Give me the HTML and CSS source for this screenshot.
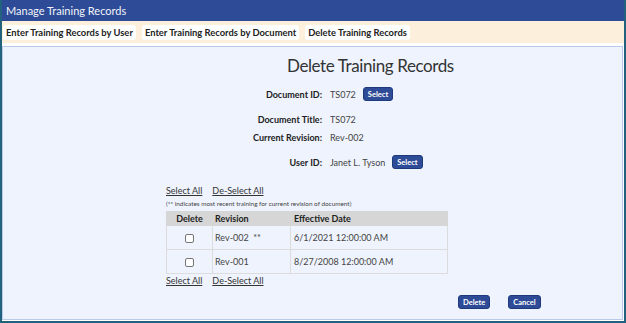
FILE: index.html
```html
<!DOCTYPE html>
<html lang="en">
<head>
    <title>Manage Training Records</title>
<link rel="stylesheet" href="styles.css">
</head>
<body>
    <div id="frame">
        <div id="titlebar">Manage Training Records</div>
        <div id="tabs">
            <a class="tab" href="#">Enter Training Records by User</a>
            <a class="tab" href="#">Enter Training Records by Document</a>
            <a class="tab" href="#">Delete Training Records</a>
        </div>
        <div id="panel">
            <h1 id="pageTitle">Delete Training Records</h1>
            <div class="row first">
                <div class="label">Document ID:</div>
                <div class="value">TS072 <button class="btn">Select</button></div>
            </div>
            <div class="row second">
                <div class="label">Document Title:</div>
                <div class="value">TS072</div>
            </div>
            <div class="row">
                <div class="label">Current Revision:</div>
                <div class="value">Rev-002</div>
            </div>
            <div class="row fourth">
                <div class="label">User ID:</div>
                <div class="value">Janet L. Tyson <button class="btn">Select</button></div>
            </div>

            <div id="records">
                <div class="links"><a href="#">Select All</a><a href="#">De-Select All</a></div>
                <div id="note">(** indicates most recent training for current revision of document)</div>
                <table id="grid">
                    <tr>
                        <th class="cDel">Delete</th>
                        <th class="cRev">Revision</th>
                        <th class="cDate">Effective Date</th>
                    </tr>
                    <tr>
                        <td class="cDel"><input type="checkbox"></td>
                        <td class="cRev">Rev-002&nbsp;&nbsp;**</td>
                        <td class="cDate">6/1/2021 12:00:00 AM</td>
                    </tr>
                    <tr>
                        <td class="cDel"><input type="checkbox"></td>
                        <td class="cRev">Rev-001</td>
                        <td class="cDate">8/27/2008 12:00:00 AM</td>
                    </tr>
                </table>
                <div class="links bottom"><a href="#">Select All</a><a href="#">De-Select All</a></div>
            </div>

            <div id="actions">
                <button class="btn">Delete</button>
                <button class="btn">Cancel</button>
            </div>
        </div>
    </div>
</body>
</html>
```

FILE: styles.css
```css
body{
    margin: 0;
    font-family: 'Lato', sans-serif;
    color: #333;
}
#frame{
    width: 622px;
    height: 321px;
    border-left: 2px solid #23627f;
    border-right: 2px solid #23627f;
    border-bottom: 2px solid #23627f;
    background-color: #fff;
    display: flex;
    flex-direction: column;
}
#titlebar{
    height: 21px;
    line-height: 21px;
    padding-left: 4px;
    background-color: #2d4b96;
    color: #f2f4fa;
    font-size: 11px;
}
#tabs{
    height: 22px;
    background-color: #fcf0dd;
    display: flex;
    align-items: center;
    gap: 6px;
    padding-left: 1px;
}
.tab{
    height: 15px;
    line-height: 15px;
    padding: 0 3px;
    background-color: #fff;
    border-radius: 3px;
    color: #222;
    font-size: 9.4px;
    font-weight: bold;
    text-decoration: none;
}
#panel{
    flex: 1;
    margin: 3px 1px 1px 0;
    border: 1px solid #b9cbe8;
    background-color: #eef3fe;
}
#pageTitle{
    margin: 7px 0 0 284px;
    font-size: 17px;
    letter-spacing: -0.4px;
    font-weight: normal;
    line-height: 24px;
    color: #333;
}
.row{
    display: flex;
    align-items: center;
    height: 18px;
    font-size: 9px;
}
.row.first{
    margin-top: 7px;
}
.row.second{
    margin-top: 7px;
}
.row.fourth{
    margin-top: 7px;
}
.label{
    width: 319px;
    text-align: right;
    font-weight: bold;
    color: #222;
}
.value{
    margin-left: 8px;
    color: #444;
    display: flex;
    align-items: center;
}
.btn{
    height: 14px;
    padding: 0 4px;
    margin-left: 7px;
    border: 1px solid #1f3a7c;
    border-radius: 3px;
    background-color: #2d4b96;
    color: #fff;
    font-family: 'Lato', sans-serif;
    font-size: 7.5px;
    font-weight: bold;
    cursor: pointer;
}
#records{
    margin: 13px 0 0 163px;
    font-size: 9px;
}
.links{
    display: flex;
    gap: 10px;
    height: 14px;
    line-height: 14px;
}
.links a{
    color: #333;
}
.links.bottom{
    margin-top: 0;
}
#note{
    font-size: 6.4px;
    color: #444;
    height: 13px;
    line-height: 11px;
}
#grid{
    width: 282px;
    border-collapse: collapse;
    font-size: 9px;
}
#grid th{
    height: 13px;
    padding: 0;
    background-color: #d6d6d6;
    text-align: left;
    font-weight: bold;
    color: #222;
    border: 1px solid #d6d6d6;
}
#grid td{
    height: 23px;
    border: 1px solid #dcdcdc;
    color: #444;
}
#grid .cDel{
    width: 45px;
    text-align: center;
    padding: 0;
}
#grid .cRev{
    width: 75px;
    padding: 0 0 0 2px;
}
#grid .cDate{
    padding: 0 0 0 3px;
}
#grid input{
    appearance: none;
    width: 9px;
    height: 9px;
    margin: 0;
    border: 1px solid #777;
    border-radius: 2px;
    background-color: #fff;
    vertical-align: middle;
}
#actions{
    display: flex;
    gap: 18px;
    margin: 7px 0 0 455px;
}
#actions .btn{
    margin-left: 0;
}
```
